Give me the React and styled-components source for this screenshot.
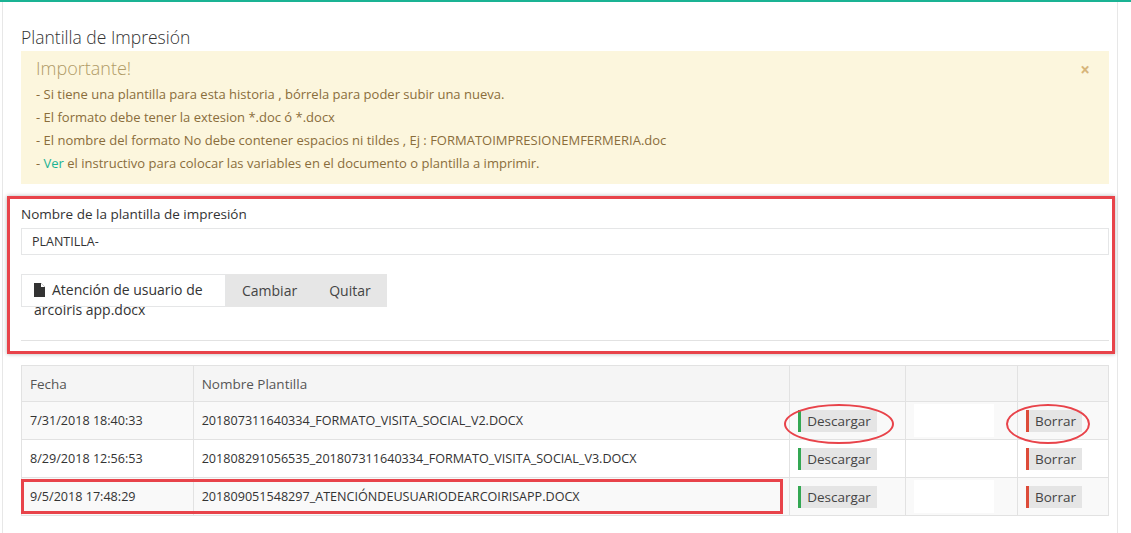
import React from "react";
import styled, { createGlobalStyle } from "styled-components";

const Global = createGlobalStyle`
  body { margin: 0; background: #fff; font-family: "Open Sans", "Noto Sans", sans-serif; color: #333; }
`;

const Page = styled.div`
  width: 1131px;
  height: 533px;
  box-sizing: border-box;
  border-top: 2px solid #1ab394;
  overflow: hidden;
`;

const Panel = styled.div`
  margin-left: 2px;
  width: 1116px;
  height: 531px;
  box-sizing: border-box;
  border-left: 1px solid #e7e7e7;
  border-right: 1px solid #e7e7e7;
  padding: 24px 8px 0 18px;
`;

const Title = styled.h3`
  margin: 0 0 3px;
  font-size: 17.5px;
  font-weight: 300;
  color: #333;
  line-height: 22px;
`;

const Alert = styled.div`
  position: relative;
  background: #fcf6dd;
  padding: 5px 15px 8px 15px;
  height: 133px;
  box-sizing: border-box;
  color: #8a6d3b;
`;

const AlertHead = styled.div`
  font-size: 18px;
  font-weight: 300;
  color: #b09a66;
  margin-bottom: 3px;
`;

const AlertLine = styled.div`
  font-size: 13px;
  line-height: 23px;
  a { color: #1ab394; text-decoration: none; }
`;

const Close = styled.span`
  position: absolute;
  right: 19px;
  top: 7px;
  font-size: 17px;
  font-weight: 700;
  color: #d7b57a;
`;

const FormBox = styled.div`
  margin: 12px 0 0 -14px;
  width: 1108px;
  height: 158px;
  box-sizing: border-box;
  border: 3px solid #e8434a;
  box-shadow: 0 0 4px rgba(0, 0, 0, 0.3);
  padding: 6px 3px 0 11px;
`;

const Label = styled.div`
  font-size: 13.5px;
  margin-bottom: 5px;
`;

const Input = styled.div`
  height: 27px;
  box-sizing: border-box;
  border: 1px solid #e5e6e7;
  padding: 0 10px;
  font-size: 12.5px;
  line-height: 25px;
`;

const FileRow = styled.div`
  display: flex;
  margin-top: 19px;
  height: 33px;
`;

const FileName = styled.div`
  width: 205px;
  box-sizing: border-box;
  border: 1px solid #e5e6e7;
  padding: 5px 0 0 12px;
  font-size: 14px;
  line-height: 20px;
  overflow: visible;
  svg { vertical-align: -2px; margin-right: 7px; }
`;

const FileBtn = styled.div`
  background: #e6e6e6;
  padding: 0 16px;
  font-size: 14px;
  line-height: 33px;
  color: #444;
`;

const Rule = styled.div`
  border-top: 1px solid #e2e2e2;
  margin-top: 33px;
`;

const Table = styled.table`
  margin-top: 11px;
  width: 1088px;
  border-collapse: collapse;
  font-size: 12.6px;
  td, th {
    border: 1px solid #e2e2e2;
    padding: 0 8px;
    text-align: left;
    position: relative;
  }
  th { height: 35px; font-weight: 400; font-size: 13.5px; color: #555; background: #f5f5f5; }
  td { height: 37px; }
  tbody tr:nth-child(odd) { background: #f9f9f9; }
`;

const Btn = styled.span`
  display: inline-block;
  background: #e5e5e5;
  border-left: 3px solid ${(p) => (p.$danger ? "#dd4b39" : "#34a853")};
  padding: 0 6px;
  font-size: 13.5px;
  line-height: 22px;
  color: #444;
`;

const Blank = styled.div`
  width: 80px;
  height: 33px;
  background: #fff;
`;

const Ring = styled.div`
  position: absolute;
  left: ${(p) => p.$l}px;
  top: 2px;
  width: ${(p) => p.$w}px;
  height: 36px;
  border: 2.5px solid #e8434a;
  border-radius: 50%;
  pointer-events: none;
`;

const Mark = styled.div`
  position: absolute;
  left: -1px;
  top: 1px;
  width: 756px;
  height: 29px;
  border: 3px solid #e8434a;
  pointer-events: none;
`;

const rows = [
  ["7/31/2018 18:40:33", "201807311640334_FORMATO_VISITA_SOCIAL_V2.DOCX", true, true],
  ["8/29/2018 12:56:53", "201808291056535_201807311640334_FORMATO_VISITA_SOCIAL_V3.DOCX", false, false],
  ["9/5/2018 17:48:29", "201809051548297_ATENCIÓNDEUSUARIODEARCOIRISAPP.DOCX", true, false],
];

export default function App() {
  return (
    <Page>
      <Global />
      <Panel>
        <Title>Plantilla de Impresión</Title>
        <Alert>
          <Close>×</Close>
          <AlertHead>Importante!</AlertHead>
          <AlertLine>- Si tiene una plantilla para esta historia , bórrela para poder subir una nueva.</AlertLine>
          <AlertLine>- El formato debe tener la extesion *.doc ó *.docx</AlertLine>
          <AlertLine>- El nombre del formato No debe contener espacios ni tildes , Ej : FORMATOIMPRESIONEMFERMERIA.doc</AlertLine>
          <AlertLine>- <a>Ver</a> el instructivo para colocar las variables en el documento o plantilla a imprimir.</AlertLine>
        </Alert>
        <FormBox>
          <Label>Nombre de la plantilla de impresión</Label>
          <Input>PLANTILLA-</Input>
          <FileRow>
            <FileName>
              <svg width="11" height="14" viewBox="0 0 11 14"><path d="M0 0h7l4 4v10H0z" fill="#333" /><path d="M7 0v4h4" fill="#fff" /></svg>
              Atención de usuario de arcoiris app.docx
            </FileName>
            <FileBtn>Cambiar</FileBtn>
            <FileBtn>Quitar</FileBtn>
          </FileRow>
          <Rule />
        </FormBox>
        <Table>
          <colgroup>
            <col style={{ width: 172 }} />
            <col style={{ width: 597 }} />
            <col style={{ width: 116 }} />
            <col style={{ width: 112 }} />
            <col style={{ width: 91 }} />
          </colgroup>
          <thead>
            <tr><th>Fecha</th><th>Nombre Plantilla</th><th></th><th></th><th></th></tr>
          </thead>
          <tbody>
            {rows.map(([date, name, blank, ring], i) => (
              <tr key={i}>
                <td>{i === 2 && <Mark />}{date}</td>
                <td>{name}</td>
                <td>{ring && <Ring $l={-6} $w={106} />}<Btn>Descargar</Btn></td>
                <td>{blank && <Blank />}</td>
                <td>{ring && <Ring $l={-12} $w={80} />}<Btn $danger>Borrar</Btn></td>
              </tr>
            ))}
          </tbody>
        </Table>
      </Panel>
    </Page>
  );
}
